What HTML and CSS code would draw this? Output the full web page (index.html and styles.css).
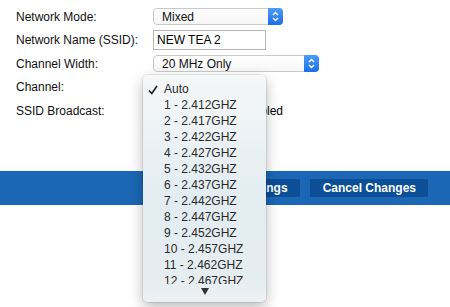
FILE: index.html
```html
<!DOCTYPE html>
<html lang="en">
<head>
  <meta charset="UTF-8">
  <title>Wireless Settings</title>
  <link rel="stylesheet" href="styles.css">
</head>
<body>
  <div class="form">
    <div class="row">
      <div class="label">Network Mode:</div>
      <div class="select mode">
        <span>Mixed</span>
        <span class="stepper">
          <svg width="7" height="11" viewBox="0 0 7 11"><path d="M1 4 L3.5 1.5 L6 4 M1 7 L3.5 9.5 L6 7" fill="none" stroke="#fff" stroke-width="1.4"/></svg>
        </span>
      </div>
    </div>
    <div class="row">
      <div class="label">Network Name (SSID):</div>
      <div class="input">NEW TEA 2</div>
    </div>
    <div class="row">
      <div class="label">Channel Width:</div>
      <div class="select width">
        <span>20 MHz Only</span>
        <span class="stepper">
          <svg width="7" height="11" viewBox="0 0 7 11"><path d="M1 4 L3.5 1.5 L6 4 M1 7 L3.5 9.5 L6 7" fill="none" stroke="#fff" stroke-width="1.4"/></svg>
        </span>
      </div>
    </div>
    <div class="row">
      <div class="label">Channel:</div>
    </div>
    <div class="row">
      <div class="label">SSID Broadcast:</div>
      <div class="check">Enabled</div>
    </div>
  </div>

  <div class="bar">
    <div class="btn">Save Settings</div>
    <div class="btn">Cancel Changes</div>
  </div>

  <div class="menu">
    <div class="list">
      <div class="item checked">
        <svg class="tick" width="10" height="10" viewBox="0 0 10 10"><path d="M1 5.5 L3.8 8.5 L9 1" fill="none" stroke="#222" stroke-width="1.7"/></svg>
        Auto
      </div>
      <div class="item">1 - 2.412GHZ</div>
      <div class="item">2 - 2.417GHZ</div>
      <div class="item">3 - 2.422GHZ</div>
      <div class="item">4 - 2.427GHZ</div>
      <div class="item">5 - 2.432GHZ</div>
      <div class="item">6 - 2.437GHZ</div>
      <div class="item">7 - 2.442GHZ</div>
      <div class="item">8 - 2.447GHZ</div>
      <div class="item">9 - 2.452GHZ</div>
      <div class="item">10 - 2.457GHZ</div>
      <div class="item">11 - 2.462GHZ</div>
      <div class="item">12 - 2.467GHZ</div>
      <div class="item">13 - 2.472GHZ</div>
    </div>
    <div class="more">
      <svg width="8" height="7" viewBox="0 0 8 7"><path d="M0 0 H8 L4 7 Z" fill="#333"/></svg>
    </div>
  </div>
</body>
</html>
```

FILE: styles.css
```css
body {
  margin: 0;
  background: #fff;
  font-family: "Liberation Sans", Arial, sans-serif;
  font-size: 12px;
  color: #111;
  position: relative;
  height: 307px;
  overflow: hidden;
}

.form {
  padding: 5px 0 0 16px;
}

.row {
  display: flex;
  align-items: center;
  height: 23.5px;
}

.label {
  width: 137px;
}

.select {
  display: flex;
  align-items: center;
  justify-content: space-between;
  height: 15px;
  border: 1px solid #c9c9c9;
  border-radius: 4px;
  background: linear-gradient(#fff, #f6f6f6);
  padding-left: 8px;
  box-sizing: content-box;
}

.select.mode {
  width: 120px;
}

.select.width {
  width: 156px;
}

.stepper {
  display: flex;
  align-items: center;
  justify-content: center;
  width: 15px;
  height: 17px;
  margin-right: -1px;
  border-radius: 0 4px 4px 0;
  background: linear-gradient(#4d9cf8, #1b6ee8);
}

.input {
  width: 108px;
  height: 18px;
  line-height: 18px;
  border: 1px solid #b5b5b5;
  padding-left: 3px;
  color: #000;
}

.check {
  padding-left: 86px;
  color: #000;
}

.bar {
  display: flex;
  justify-content: flex-end;
  gap: 10px;
  margin-top: 48px;
  height: 34px;
  padding: 8px 22px 0 0;
  box-sizing: border-box;
  background: #1b67b5;
}

.btn {
  height: 18px;
  line-height: 19px;
  padding: 0 12px 0 13px;
  background: #0c4f96;
  color: #fff;
  font-weight: bold;
}

.menu {
  position: absolute;
  left: 143px;
  top: 75px;
  width: 123px;
  height: 227px;
  border-radius: 5px;
  background: linear-gradient(#f5f7f8, #e2ecf1 55%, #e6edf0 90%, #eef1f2);
  box-shadow: 0 0 0 1px rgba(0, 0, 0, 0.08), 0 5px 14px rgba(0, 0, 0, 0.28);
  padding-top: 6px;
  box-sizing: border-box;
}

.list {
  height: 203px;
  overflow: hidden;
}

.item {
  position: relative;
  height: 16px;
  line-height: 16px;
  padding-left: 21px;
  color: #2a2a2a;
}

.tick {
  position: absolute;
  left: 5px;
  top: 4px;
}

.more {
  display: flex;
  justify-content: center;
  margin-top: 4px;
}
```
